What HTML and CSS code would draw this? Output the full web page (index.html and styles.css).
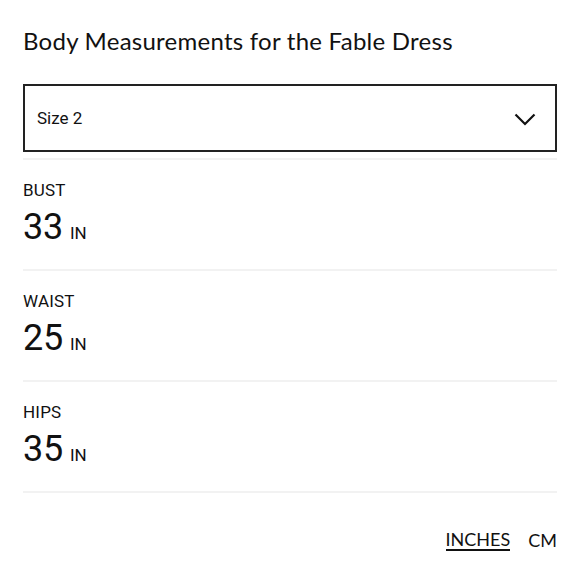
FILE: index.html
```html
<!DOCTYPE html>
<html>
<head>
<meta charset="utf-8">
<link rel="stylesheet" href="styles.css">
</head>
<body>
<main class="page">
  <h1 class="title">Body Measurements for the Fable Dress</h1>
  <div class="select">
    <span class="select-value">Size 2</span>
    <svg class="chevron" width="22" height="13" viewBox="0 0 22 13"><path d="M1.5 1.5 L11 11 L20.5 1.5" fill="none" stroke="#111" stroke-width="2.2"/></svg>
  </div>
  <ul class="list">
    <li class="row">
      <div class="label">BUST</div>
      <div class="value"><span class="num">33</span><span class="unit">IN</span></div>
    </li>
    <li class="row">
      <div class="label">WAIST</div>
      <div class="value"><span class="num">25</span><span class="unit">IN</span></div>
    </li>
    <li class="row">
      <div class="label">HIPS</div>
      <div class="value"><span class="num">35</span><span class="unit">IN</span></div>
    </li>
  </ul>
  <div class="units">
    <span class="unit-opt active">INCHES</span>
    <span class="unit-opt">CM</span>
  </div>
</main>
</body>
</html>
```
FILE: styles.css
```css
* { box-sizing: border-box; }
html, body { margin: 0; padding: 0; background: #fff; }
body { color: #111; font-family: Roboto, "Liberation Sans", sans-serif; }
.page { padding: 26px 23px 0 23px; }
.title {
  margin: 0;
  font-family: Lato, "Noto Sans", sans-serif;
  font-weight: 400;
  font-size: 24px;
  line-height: 30px;
  letter-spacing: 0.25px;
}
.select {
  margin-top: 28px;
  height: 68px;
  border: 2px solid #222;
  display: flex;
  align-items: center;
  justify-content: space-between;
  padding: 0 19px 0 12px;
}
.select-value { font-size: 17px; }
.chevron { display: block; margin-top: 2px; }
.list { list-style: none; margin: 6px 0 0 0; padding: 0; border-top: 2px solid #f2f2f2; }
.row {
  height: 111px;
  border-bottom: 2px solid #f2f2f2;
  padding-top: 19px;
}
.label { font-size: 17px; line-height: 22px; letter-spacing: 0.2px; }
.value { margin-top: 3px; display: flex; align-items: baseline; }
.num { font-size: 36px; line-height: 46px; letter-spacing: -0.3px; }
.unit { font-size: 17px; margin-left: 7px; }
.units {
  display: flex;
  justify-content: flex-end;
  gap: 18px;
  margin-top: 36px;
  font-family: Lato, "Noto Sans", sans-serif;
  font-size: 18px;
  line-height: 22px;
}
.unit-opt.active { border-bottom: 2px solid #111; line-height: 20px; }
```
